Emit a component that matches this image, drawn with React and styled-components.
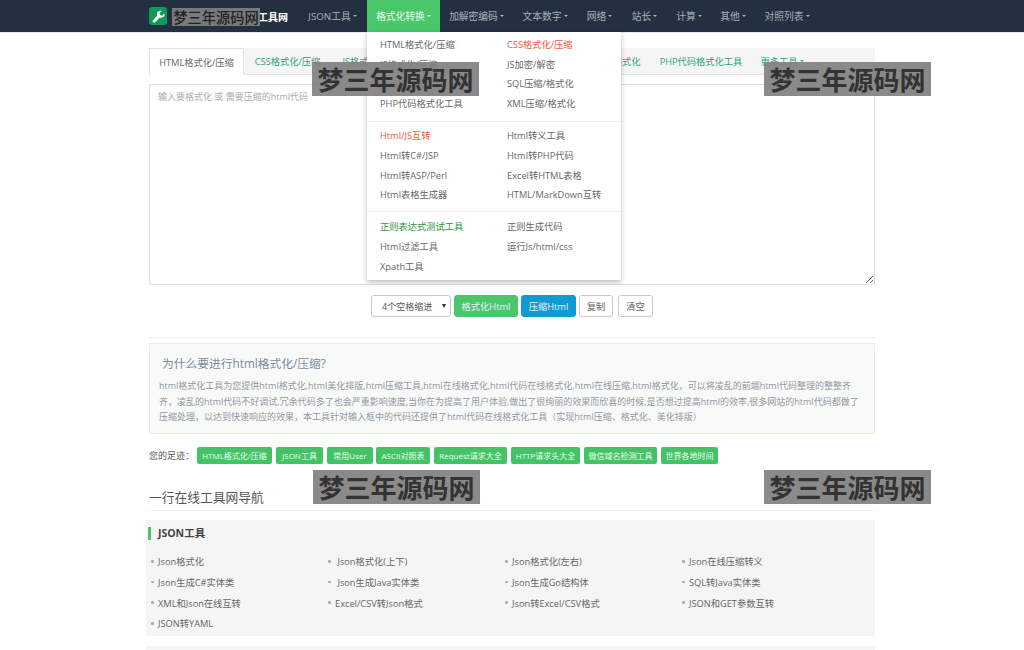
import React from "react";
import styled, { createGlobalStyle } from "styled-components";

const Global = createGlobalStyle`
  html, body { margin: 0; padding: 0; background: #fff; height: 650px; overflow: hidden; }
  body { font-family: "Open Sans", "Noto Sans CJK SC", sans-serif; font-size: 9.25px; color: #555; }
  * { box-sizing: border-box; }
`;
const Page = styled.div`position: relative; width: 1024px; height: 650px; overflow: hidden;`;
const Nav = styled.nav`height: 33px; background: #233040; border-bottom: 1px solid #e8eaec;`;
const Wrap = styled.div`width: 726px; margin: 0 auto; position: relative;`;
const NavInner = styled(Wrap)`display: flex; height: 32px; align-items: center;`;
const Logo = styled.div`width: 18px; height: 18px; border-radius: 3px; background: #0f9a5a; display: flex; align-items: center; justify-content: center;`;
const Brand = styled.div`color: #fff; font-weight: 700; font-size: 10px; text-align: right; padding-right: 0; flex: none; width: 121px;`;
const NavGap = styled.div`width: 10px; flex: none;`;
const NavItem = styled.div`
  height: 32px; display: flex; align-items: center; flex: none; color: ${p => p.$active ? "#eafff0" : "#a9b1ba"};
  background: ${p => p.$active ? "#4ac76b" : "transparent"}; font-size: 9.75px; gap: 2px; width: ${p => p.$w}px; justify-content: center; white-space: nowrap;
`;
const Caret = styled.i`display: inline-block; width: 0; height: 0; border: 2.5px solid transparent; border-top-color: currentColor; border-bottom: 0;`;
const Main = styled(Wrap)`padding-top: 15px;`;
const Tabs = styled.div`display: flex; height: 27px; background: #f5f5f5; border-bottom: 1px solid #e3e3e3; align-items: stretch;`;
const Tab = styled.div`
  flex: none; width: ${p => p.$w}px; display: flex; align-items: center; justify-content: center; gap: 2px; white-space: nowrap;
  color: ${p => p.$on ? "#666" : "#1fa67a"}; background: ${p => p.$on ? "#fff" : "transparent"};
  border: ${p => p.$on ? "1px solid #e3e3e3" : "0"}; border-bottom: 0; margin-bottom: ${p => p.$on ? "-1px" : 0};
`;
const Editor = styled.textarea`
  display: block; width: 726px; height: 201px; margin-top: 9px; border: 1px solid #ddd; border-radius: 2px; padding: 5px 8px; resize: vertical;
  font: inherit; font-size: 9px; outline: none; &::placeholder { color: #aaa; }
`;
const Actions = styled.div`display: flex; justify-content: center; align-items: center; gap: 3px; height: 22px; margin-top: 10px;`;
const SelectBox = styled.div`position: relative; width: 80px; height: 22px; border: 1px solid #ccc; border-radius: 3px; display: flex; align-items: center; padding-left: 10px; color: #555; background: #fff; font-size: 9px;
  &::after { content: ""; position: absolute; right: 4px; top: 8px; border: 2.5px solid transparent; border-top: 4px solid #333; border-bottom: 0; }
`;
const Btn = styled.button`
  height: 22px; width: ${p => p.$w}px; padding: 0; border-radius: 3px; font: inherit; font-size: 9.25px; margin-right: ${p => p.$mr || 0}px;
  color: ${p => p.$light ? "#666" : "#eef"}; background: ${p => p.$bg || "#fff"}; border: 1px solid ${p => p.$bg || "#ccc"};
`;
const Rule = styled.div`height: 1px; background: #eee; margin-top: 20px;`;
const Panel = styled.section`height: 91px; margin-top: 5px; background: #f8fafa; border: 1px solid #e4edd8; border-radius: 3px; padding: 0 9px;`;
const PanelTitle = styled.h3`margin: 0; font-size: 11.75px; font-weight: 400; color: #7a8b9c; padding: 10px 0 0 3px; height: 34px; line-height: 18px;`;
const PanelText = styled.p`margin: 0; font-size: 9px; line-height: 15.7px; color: #9098a0; white-space: nowrap;`;
const Trail = styled.div`display: flex; align-items: center; height: 18px; margin-top: 12px;`;
const TrailLabel = styled.span`width: 48px; color: #555; flex: none; font-size: 9px;`;
const Tag = styled.span`flex: none; height: 17px; width: ${p => p.$w}px; margin-right: ${p => p.$mr ?? 4}px; background: #43c366; color: #e8fff0; border-radius: 2px; display: flex; align-items: center; justify-content: center; font-size: 8px; white-space: nowrap;`;
const NavHeading = styled.h2`margin: 23px 0 0; height: 24px; font-size: 12.75px; font-weight: 400; color: #555; line-height: 20px; border-bottom: 1px solid #eee;`;
const Group = styled.section`margin: ${p => p.$mt}px 0 0 -3px; width: 729px; background: #f5f5f5; height: ${p => p.$h}px; padding-left: 2px;`;
const GroupTitle = styled.h4`margin: 0; position: relative; top: 7px; height: 13px; border-left: 3px solid #4ac76b; padding-left: 7px; font-size: 10.5px; line-height: 13px; font-weight: 700; color: #444;`;
const Links = styled.ul`list-style: none; margin: 0 0 0 2px; padding: 18px 0 0; display: grid; grid-template-columns: repeat(4, 177px); grid-auto-rows: 20.7px;`;
const LinkItem = styled.li`display: flex; align-items: center; font-size: 9.25px; color: #666; white-space: pre;
  &::before { content: ""; width: 2.5px; height: 2.5px; background: #aaa; border-radius: 50%; margin: 0 4.5px 0 1px; }
`;
const Menu = styled.div`position: absolute; left: 367px; top: 32px; width: 254px; height: 248px; background: #fff; box-shadow: 0 2px 5px rgba(0,0,0,.28); padding-top: 2px;`;
const MenuBlock = styled.div`display: grid; grid-template-columns: 127px 127px; padding-left: 13px; grid-auto-rows: 19.8px; align-items: center; width: 267px;`;
const MenuDivider = styled.div`height: 1px; background: #eee; margin: ${p => p.$m};`;
const MenuLink = styled.div`font-size: 9.25px; white-space: nowrap; color: ${p => p.$c || "#666"};`;
const Mark = styled.div`
  position: absolute; left: ${p => p.$x}px; top: ${p => p.$y}px; width: 167px; height: 34px; background: rgba(128,128,128,.92); color: #333;
  font-family: "Noto Sans CJK SC", sans-serif; font-weight: 700; font-size: 26px; line-height: 33px; text-align: center; white-space: nowrap;
`;
const SmallMark = styled(Mark)`width: 88px; height: 18px; font-size: 14.25px; line-height: 18px; font-weight: 500; color: #222;`;

const navItems = [["JSON工具", 69], ["格式化转换", 73, true], ["加解密编码", 73], ["文本数字", 64], ["网络", 45], ["站长", 45], ["计算", 44], ["其他", 44], ["对照列表", 64]];
const tabs = [["HTML格式化/压缩", 95, true, 0], ["CSS格式化/压缩", 87], ["JS格式化/压缩", 80], ["XML格式化/压缩", 84], ["SQL压缩/格式化", 91], ["SQL格式化", 64], ["PHP代码格式化工具", 102], ["更多工具", 60, false, 1]];
const menuA = [["HTML格式化/压缩"], ["CSS格式化/压缩", "#f0583a"], ["JS格式化/压缩"], ["JS加密/解密"], ["Java格式化"], ["SQL压缩/格式化"], ["PHP代码格式化工具"], ["XML压缩/格式化"]];
const menuB = [["Html/JS互转", "#f0583a"], ["Html转义工具"], ["Html转C#/JSP"], ["Html转PHP代码"], ["Html转ASP/Perl"], ["Excel转HTML表格"], ["Html表格生成器"], ["HTML/MarkDown互转"]];
const menuC = [["正则表达式测试工具", "#2a9a3a"], ["正则生成代码"], ["Html过滤工具"], ["运行Js/html/css"], ["Xpath工具"]];
const trail = [["HTML格式化/压缩", 75], ["JSON工具", 47], ["常用User", 46, 3], ["ASCII对照表", 54], ["Request请求大全", 73], ["HTTP请求头大全", 69], ["微信域名检测工具", 73], ["世界各地时间", 57, 0]];
const links = ["Json格式化", " Json格式化(上下)", "Json格式化(左右)", "Json在线压缩转义", "Json生成C#实体类", " Json生成Java实体类", "Json生成Go结构体", "SQL转Java实体类", "XML和Json在线互转", "Excel/CSV转Json格式", "Json转Excel/CSV格式", "JSON和GET参数互转", "JSON转YAML"];

const Wrench = () => (
  <svg width="13" height="13" viewBox="0 0 24 24" fill="#fff"><path d="M22.7 6.3l-4.1 4.1-3.6-1-1-3.6 4.1-4.1c-2.4-.9-5.2-.4-7.1 1.5-1.9 1.9-2.4 4.6-1.5 7L2 18.7c-1.2 1.2-1.2 2.9-.1 3.9s2.7 1.1 3.9-.1l8.6-8.5c2.4.9 5.1.4 7-1.5 1.9-1.9 2.4-4.7 1.3-6.2z"/></svg>
);
const MenuLinks = ({ items }) => items.map(([t, c]) => <MenuLink key={t} $c={c}>{t}</MenuLink>);

export default function App() {
  return (
    <Page>
      <Global />
      <Nav>
        <NavInner>
          <Logo><Wrench /></Logo>
          <Brand>工具网</Brand>
          <NavGap />
          {navItems.map(([t, w, a]) => <NavItem key={t} $w={w} $active={a}>{t}<Caret /></NavItem>)}
        </NavInner>
      </Nav>
      <Main>
        <Tabs>
          {tabs.map(([t, w, on, c]) => <Tab key={t} $w={w} $on={on}>{t}{c ? <Caret /> : null}</Tab>)}
        </Tabs>
        <Editor placeholder="输入要格式化 或 需要压缩的html代码" readOnly />
        <Actions>
          <SelectBox>4个空格缩进</SelectBox>
          <Btn $w={64} $bg="#4ac76b">格式化Html</Btn>
          <Btn $w={55} $bg="#0e9bd1">压缩Html</Btn>
          <Btn $w={34} $light $mr={2}>复制</Btn>
          <Btn $w={35} $light>清空</Btn>
        </Actions>
        <Rule />
        <Panel>
          <PanelTitle>为什么要进行html格式化/压缩?</PanelTitle>
          <PanelText>html格式化工具为您提供html格式化,html美化排版,html压缩工具,html在线格式化,html代码在线格式化,html在线压缩,html格式化，可以将凌乱的前端html代码整理的整整齐</PanelText>
          <PanelText>齐，凌乱的html代码不好调试,冗余代码多了也会严重影响速度,当你在为提高了用户体验,做出了很绚丽的效果而欣喜的时候,是否想过提高html的效率,很多网站的html代码都做了</PanelText>
          <PanelText>压缩处理，以达到快速响应的效果，本工具针对输入框中的代码还提供了html代码在线格式化工具（实现html压缩、格式化、美化排版）</PanelText>
        </Panel>
        <Trail>
          <TrailLabel>您的足迹：</TrailLabel>
          {trail.map(([t, w, m]) => <Tag key={t} $w={w} $mr={m}>{t}</Tag>)}
        </Trail>
        <NavHeading>一行在线工具网导航</NavHeading>
        <Group $h={116} $mt={9}>
          <GroupTitle>JSON工具</GroupTitle>
          <Links>{links.map(l => <LinkItem key={l}>{l}</LinkItem>)}</Links>
        </Group>
        <Group $h={40} $mt={10} />
      </Main>
      <Menu>
        <MenuBlock><MenuLinks items={menuA} /></MenuBlock>
        <MenuDivider $m="8px 0 3px" />
        <MenuBlock><MenuLinks items={menuB} /></MenuBlock>
        <MenuDivider $m="7px 0 4px" />
        <MenuBlock><MenuLinks items={menuC} /></MenuBlock>
      </Menu>
      <SmallMark $x={172} $y={8}>梦三年源码网</SmallMark>
      <Mark $x={312} $y={62}>梦三年源码网</Mark>
      <Mark $x={764} $y={62}>梦三年源码网</Mark>
      <Mark $x={313} $y={470}>梦三年源码网</Mark>
      <Mark $x={764} $y={470}>梦三年源码网</Mark>
    </Page>
  );
}
